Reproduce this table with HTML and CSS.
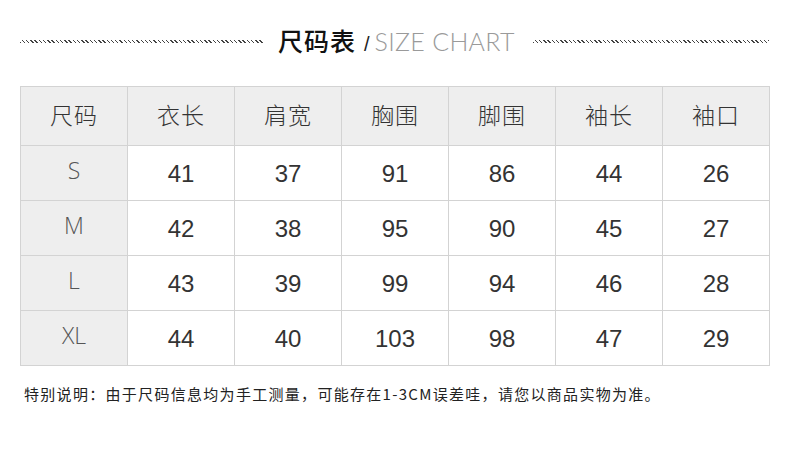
FILE: index.html
```html
<!DOCTYPE html>
<html lang="zh">
<head>
<meta charset="utf-8">
<link rel="stylesheet" href="styles.css">
</head>
<body>
<div class="page">
  <div class="heading">
    <span class="rule rule-left"></span>
    <div class="title"><span class="cn">尺码表</span><span class="slash">/</span><span class="en">SIZE CHART</span></div>
    <span class="rule rule-right"></span>
  </div>
  <div class="chart">
    <div class="cell head">尺码</div><div class="cell head">衣长</div><div class="cell head">肩宽</div><div class="cell head">胸围</div><div class="cell head">脚围</div><div class="cell head">袖长</div><div class="cell head">袖口</div>
    <div class="cell size">S</div><div class="cell num">41</div><div class="cell num">37</div><div class="cell num">91</div><div class="cell num">86</div><div class="cell num">44</div><div class="cell num">26</div>
    <div class="cell size">M</div><div class="cell num">42</div><div class="cell num">38</div><div class="cell num">95</div><div class="cell num">90</div><div class="cell num">45</div><div class="cell num">27</div>
    <div class="cell size">L</div><div class="cell num">43</div><div class="cell num">39</div><div class="cell num">99</div><div class="cell num">94</div><div class="cell num">46</div><div class="cell num">28</div>
    <div class="cell size">XL</div><div class="cell num">44</div><div class="cell num">40</div><div class="cell num">103</div><div class="cell num">98</div><div class="cell num">47</div><div class="cell num">29</div>
  </div>
  <p class="note">特别说明：由于尺码信息均为手工测量，可能存在1-3CM误差哇，请您以商品实物为准。</p>
</div>
</body>
</html>
```
FILE: styles.css
```css
html, body {
  margin: 0;
  padding: 0;
  background: #ffffff;
}
.page {
  width: 790px;
  height: 450px;
  padding: 0 0 0 20px;
  box-sizing: border-box;
  font-family: "Noto Sans CJK SC", "Noto Sans", sans-serif;
}
.heading {
  display: flex;
  align-items: center;
  height: 80px;
  width: 749px;
}
.rule {
  height: 3px;
  margin-top: 2px;
  background: repeating-linear-gradient(45deg, #444 0 1px, transparent 1px 3px);
}
.rule-left {
  width: 243px;
}
.rule-right {
  width: 236px;
}
.title {
  flex: 1;
  display: flex;
  align-items: baseline;
  padding-left: 15px;
}
.cn {
  font-size: 25px;
  font-weight: 500;
  color: #111;
  letter-spacing: 1px;
}
.slash {
  font-family: "Liberation Sans", sans-serif;
  font-size: 20px;
  color: #222;
  margin: 0 5px 0 8px;
}
.en {
  font-family: "Lato", "Open Sans", sans-serif;
  font-weight: 300;
  font-size: 25px;
  color: #9a9a9a;
  letter-spacing: 0.3px;
}
.chart {
  margin-top: 6px;
  display: grid;
  grid-template-columns: repeat(7, 107px);
  grid-template-rows: 59px repeat(4, 55px);
  border-left: 1px solid #d3d3d3;
  border-top: 1px solid #d3d3d3;
  width: 749px;
}
.cell {
  box-sizing: border-box;
  border-right: 1px solid #d3d3d3;
  border-bottom: 1px solid #d3d3d3;
  display: flex;
  align-items: center;
  justify-content: center;
}
.head {
  background: #eeeeee;
  font-size: 23px;
  font-weight: 300;
  color: #333;
  letter-spacing: 1px;
  padding-bottom: 5px;
}
.size {
  background: #eeeeee;
  font-family: "Open Sans", "Lato", sans-serif;
  font-weight: 300;
  font-size: 23px;
  color: #555;
  padding-bottom: 6px;
}
.num {
  font-family: "Liberation Sans", Arial, sans-serif;
  font-size: 24px;
  color: #333;
  padding-top: 2px;
}
.note {
  margin: 18px 0 0 4px;
  font-size: 15px;
  line-height: 20px;
  color: #222;
  letter-spacing: 1.3px;
}
```
